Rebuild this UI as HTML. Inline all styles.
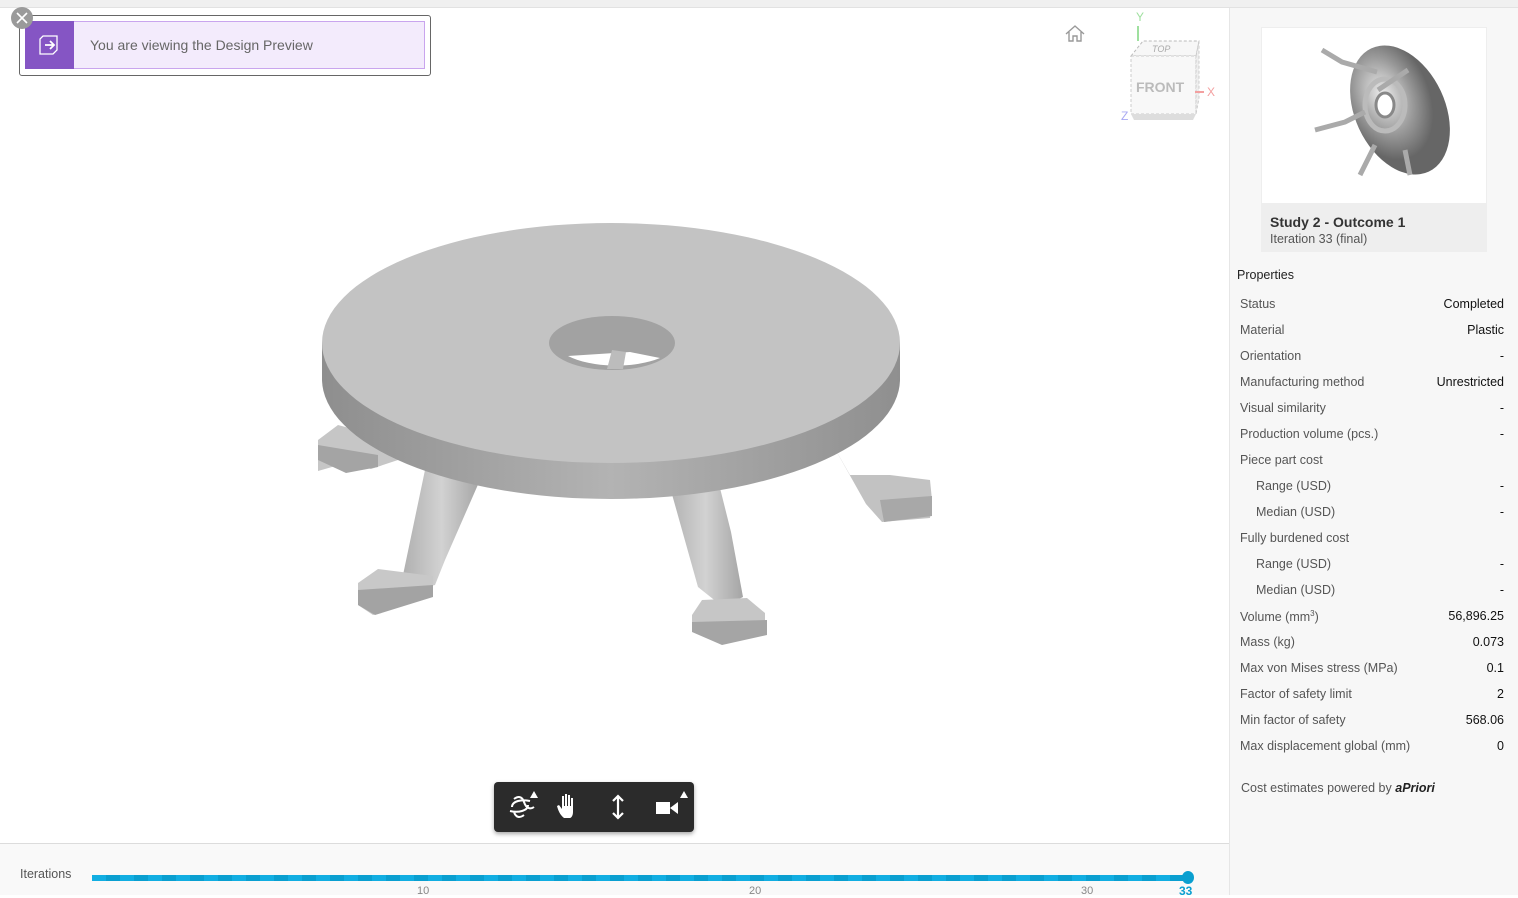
<!DOCTYPE html>
<html><head><style>
*{margin:0;padding:0;box-sizing:border-box}
body{width:1518px;height:895px;overflow:hidden;background:#fff;font-family:"Liberation Sans",sans-serif;position:relative;color:#3c3c3c}
.top{position:absolute;left:0;top:0;width:1518px;height:8px;background:#f0f0f0;border-bottom:1px solid #e2e2e2}
.side{position:absolute;left:1229px;top:8px;width:289px;height:887px;background:#f7f7f7;border-left:1px solid #e6e6e6}
.bottom{position:absolute;left:0;top:843px;width:1229px;height:52px;background:#f9f9f9;border-top:1px solid #dcdcdc}
.row{position:absolute;left:1240px;width:264px;font-size:12.5px;color:#555;display:flex;justify-content:space-between}
.row b{font-weight:normal;color:#111}
</style></head><body>
<div class="top"></div>
<div class="side"></div>
<div class="bottom"></div>

<div style="position:absolute;left:19px;top:15px;width:412px;height:61px;border:1px solid #666;border-radius:3px;background:#fff"></div>
<div style="position:absolute;left:25px;top:21px;width:49px;height:48px;background:#8555c4"></div>
<svg style="position:absolute;left:38px;top:33px" width="24" height="24" viewBox="0 0 24 24"><path d="M5 3h14v14l-4 4H2V6z" fill="none" stroke="#fff" stroke-width="1.3"/><path d="M7 12h9M12 8l4 4-4 4" fill="none" stroke="#fff" stroke-width="1.8"/></svg>
<div style="position:absolute;left:74px;top:21px;width:351px;height:48px;background:#f3ebfc;border:1px solid #c9a5ee;border-left:none;font-size:14px;color:#666;padding:15px 0 0 16px">You are viewing the Design Preview</div>
<div style="position:absolute;left:11px;top:7px;width:22px;height:22px;border-radius:50%;background:#9a9a9a"></div>
<svg style="position:absolute;left:11px;top:7px" width="22" height="22"><path d="M6 6l10 10M16 6L6 16" stroke="#fff" stroke-width="1.6"/></svg>

<svg style="position:absolute;left:1064px;top:24px" width="22" height="20" viewBox="0 0 22 20"><path d="M2 10L11 2l9 8M5 8v9h4v-5h4v5h4V8" fill="none" stroke="#999" stroke-width="1.4"/></svg>
<svg style="position:absolute;left:1118px;top:8px" width="105" height="115">
<text x="18" y="13" fill="#9fe09f" font-size="12" font-family="Liberation Sans">Y</text>
<line x1="20" y1="18" x2="20" y2="33" stroke="#9fe09f" stroke-width="2"/>
<path d="M13 48l12-15h56l-3 15z" fill="#f7f7f7" stroke="#bbb" stroke-dasharray="3,2"/>
<path d="M13 48h65v58H13z" fill="#f8f8f8" stroke="#ccc" stroke-dasharray="3,2"/>
<path d="M78 48l3-15v57l-3 16z" fill="#eee" stroke="#ccc" stroke-dasharray="3,2"/>
<path d="M13 106h65l-3 6H16z" fill="#ddd"/>
<text x="34" y="44" fill="#aaa" font-size="9" font-style="italic" font-family="Liberation Sans">TOP</text>
<text x="18" y="84" fill="#bbb" font-size="14" font-weight="bold" font-family="Liberation Sans">FRONT</text>
<text x="89" y="88" fill="#f3a0a0" font-size="12" font-family="Liberation Sans">X</text>
<line x1="77" y1="84" x2="86" y2="84" stroke="#f3a0a0" stroke-width="2"/>
<text x="3" y="112" fill="#a9a9f3" font-size="12" font-family="Liberation Sans">Z</text>
</svg>

<svg style="position:absolute;left:0;top:0" width="1229" height="843">
<defs>
<linearGradient id="side" x1="0" x2="1"><stop offset="0" stop-color="#8e8e8e"/><stop offset=".5" stop-color="#b3b3b3"/><stop offset="1" stop-color="#8f8f8f"/></linearGradient>
<linearGradient id="leg" x1="0" x2="1"><stop offset="0" stop-color="#b0b0b0"/><stop offset=".5" stop-color="#d2d2d2"/><stop offset="1" stop-color="#a5a5a5"/></linearGradient>
</defs>
<path d="M318 440l20-15 45 12 18 22-30 10-25-6-28 8z" fill="#c6c6c6"/>
<path d="M318 445v15l28 13 32-6v-12z" fill="#a4a4a4"/>
<path d="M830 440l20 35 40 0 40 5 2 20-2 18-48 4-16-18z" fill="#c2c2c2"/>
<path d="M880 500l52 -4v20l-48 6z" fill="#a8a8a8"/>
<path d="M425 470l55 10-35 80-10 25-20 5-12-15z" fill="url(#leg)"/>
<path d="M358 583l20-14 55 7v20l-60 19-15-10z" fill="#c8c8c8"/>
<path d="M358 590v15l17 10 58-18v-12z" fill="#a3a3a3"/>
<path d="M668 480l48 -8 15 60 12 65-20 10-25-20z" fill="url(#leg)"/>
<path d="M692 615l10-15 45-2 18 15v15l-45 12-28-10z" fill="#c6c6c6"/>
<path d="M692 622v10l30 13 45-10v-15z" fill="#a5a5a5"/>
<path d="M322 343v36a289 120 0 0 0 578 0v-36z" fill="url(#side)"/>
<ellipse cx="611" cy="343" rx="289" ry="120" fill="#c3c3c3"/>
<ellipse cx="612" cy="343" rx="63" ry="27" fill="#a2a2a2"/>
<path d="M568 356a63 27 0 0 0 92 2l-30-6z" fill="#fff"/>
<path d="M612 350l14 2-3 17h-16z" fill="#bcbcbc"/>
</svg>

<div style="position:absolute;left:494px;top:782px;width:200px;height:50px;background:#2b2b2b;border-radius:4px;box-shadow:0 2px 4px rgba(0,0,0,.35)"></div>
<svg style="position:absolute;left:494px;top:782px" width="200" height="50">
<path d="M18 25c0-6 10-8 18-6M34 23c0 6-10 8-18 6M20 17c4-3 8-3 10 3 2 6 6 8 10 5M30 33c-4 3-8 3-10-3" fill="none" stroke="#fff" stroke-width="2"/>
<path d="M36 16l4-7 4 7z" fill="#fff"/>
<path d="M70 36c-4-3-6-8-7-12l2-1 3 4V14h2v10h1V12h2v12h1V13h2v11h1V16h2v14c0 4-2 6-3 6z" fill="#fff"/>
<path d="M124 14v22M119 19l5-5 5 5M119 31l5 5 5-5" fill="none" stroke="#fff" stroke-width="2.2"/>
<rect x="162" y="20" width="14" height="12" fill="#fff"/><path d="M176 26l8-6v12z" fill="#fff"/>
<path d="M186 16l4-7 4 7z" fill="#fff"/>
</svg>

<div style="position:absolute;left:20px;top:867px;font-size:12.5px;color:#555">Iterations</div>
<div style="position:absolute;left:92px;top:875px;width:1096px;height:6px;background:repeating-linear-gradient(90deg,#12aee2 0 14px,#0a9fd0 14px 28px)"></div>
<div style="position:absolute;left:1182px;top:871px;width:12px;height:13px;border-radius:50%;background:#0a9fd0"></div>
<div style="position:absolute;left:417px;top:885px;font-size:11px;color:#888">10</div>
<div style="position:absolute;left:749px;top:885px;font-size:11px;color:#888">20</div>
<div style="position:absolute;left:1081px;top:885px;font-size:11px;color:#888">30</div>
<div style="position:absolute;left:1179px;top:884px;font-size:12px;color:#0a9fd0;font-weight:bold">33</div>

<div style="position:absolute;left:1261px;top:27px;width:226px;height:177px;background:#fff;border:1px solid #eee"></div>
<svg style="position:absolute;left:1300px;top:30px" width="160" height="160" viewBox="0 0 160 160">
<defs><radialGradient id="m" cx=".4" cy=".35"><stop offset="0" stop-color="#eee"/><stop offset=".6" stop-color="#999"/><stop offset="1" stop-color="#666"/></radialGradient></defs>
<ellipse cx="100" cy="80" rx="45" ry="68" transform="rotate(-25 100 80)" fill="url(#m)"/>
<ellipse cx="85" cy="75" rx="20" ry="26" fill="none" stroke="#bbb" stroke-width="5"/>
<ellipse cx="85" cy="75" rx="9" ry="12" fill="#fff" stroke="#888" stroke-width="3"/>
<path d="M22 20l20 12 35 10M15 100l30-8 20-10M60 145l15-30M110 145l-5-25M108 40l-30 20" stroke="#aaa" stroke-width="5" fill="none"/>
</svg>
<div style="position:absolute;left:1261px;top:204px;width:226px;height:48px;background:#eeeeee"></div>
<div style="position:absolute;left:1270px;top:214px;font-size:14px;font-weight:bold;color:#333">Study 2 - Outcome 1</div>
<div style="position:absolute;left:1270px;top:232px;font-size:12.5px;color:#555">Iteration 33 (final)</div>
<div style="position:absolute;left:1237px;top:268px;font-size:12.5px;color:#222">Properties</div>

<div class="row" style="top:297px"><span>Status</span><b>Completed</b></div>
<div class="row" style="top:323px"><span>Material</span><b>Plastic</b></div>
<div class="row" style="top:349px"><span>Orientation</span><b>-</b></div>
<div class="row" style="top:375px"><span>Manufacturing method</span><b>Unrestricted</b></div>
<div class="row" style="top:401px"><span>Visual similarity</span><b>-</b></div>
<div class="row" style="top:427px"><span>Production volume (pcs.)</span><b>-</b></div>
<div class="row" style="top:453px"><span>Piece part cost</span><b></b></div>
<div class="row" style="top:479px"><span style="padding-left:16px">Range (USD)</span><b>-</b></div>
<div class="row" style="top:505px"><span style="padding-left:16px">Median (USD)</span><b>-</b></div>
<div class="row" style="top:531px"><span>Fully burdened cost</span><b></b></div>
<div class="row" style="top:557px"><span style="padding-left:16px">Range (USD)</span><b>-</b></div>
<div class="row" style="top:583px"><span style="padding-left:16px">Median (USD)</span><b>-</b></div>
<div class="row" style="top:609px"><span>Volume (mm<sup style="font-size:8px">3</sup>)</span><b>56,896.25</b></div>
<div class="row" style="top:635px"><span>Mass (kg)</span><b>0.073</b></div>
<div class="row" style="top:661px"><span>Max von Mises stress (MPa)</span><b>0.1</b></div>
<div class="row" style="top:687px"><span>Factor of safety limit</span><b>2</b></div>
<div class="row" style="top:713px"><span>Min factor of safety</span><b>568.06</b></div>
<div class="row" style="top:739px"><span>Max displacement global (mm)</span><b>0</b></div>
<div style="position:absolute;left:1241px;top:781px;font-size:12.5px;color:#555">Cost estimates powered by <b style="color:#222;font-style:italic">aPriori</b></div>
</body></html>
